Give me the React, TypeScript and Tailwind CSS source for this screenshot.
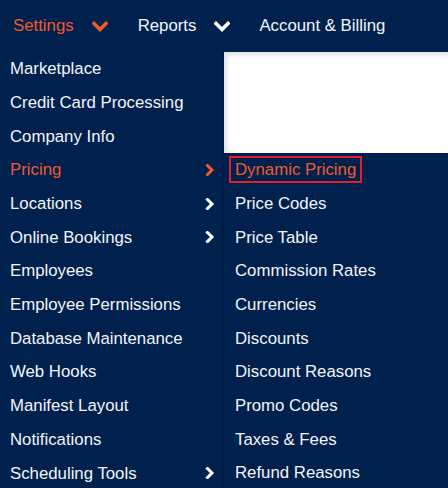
import React from 'react';

const NAVY = 'bg-[#00204e]';

const leftItems: { label: string; sub?: boolean; active?: boolean }[] = [
  { label: 'Marketplace' },
  { label: 'Credit Card Processing' },
  { label: 'Company Info' },
  { label: 'Pricing', sub: true, active: true },
  { label: 'Locations', sub: true },
  { label: 'Online Bookings', sub: true },
  { label: 'Employees' },
  { label: 'Employee Permissions' },
  { label: 'Database Maintenance' },
  { label: 'Web Hooks' },
  { label: 'Manifest Layout' },
  { label: 'Notifications' },
  { label: 'Scheduling Tools', sub: true },
];

const pricingItems = [
  'Dynamic Pricing',
  'Price Codes',
  'Price Table',
  'Commission Rates',
  'Currencies',
  'Discounts',
  'Discount Reasons',
  'Promo Codes',
  'Taxes & Fees',
  'Refund Reasons',
];

const ChevronDown = ({ className }: { className?: string }) => (
  <svg width="16" height="11" viewBox="0 0 16 11" className={className} fill="none">
    <path d="M2 2.5 L8 8.5 L14 2.5" stroke="currentColor" strokeWidth="3.6" strokeLinecap="square" />
  </svg>
);

const ChevronRight = ({ className }: { className?: string }) => (
  <svg width="10" height="12" viewBox="0 0 10 12" className={className} fill="none">
    <path d="M2.5 1.5 L7 6 L2.5 10.5" stroke="currentColor" strokeWidth="3" strokeLinecap="square" />
  </svg>
);

export default function App() {
  return (
    <div
      className={`w-[448px] h-[488px] overflow-hidden ${NAVY} text-[16.8px] text-[#f3f5f8] flex flex-col`}
      style={{ fontFamily: '"Liberation Sans", Arial, sans-serif' }}
    >
      {/* top nav */}
      <div className="h-[52px] shrink-0 flex items-center pl-[13px]">
        <span className="text-[#f05a28]">Settings</span>
        <ChevronDown className="ml-[18px] text-[#f05a28]" />
        <span className="ml-[30px]">Reports</span>
        <ChevronDown className="ml-[18px] text-white" />
        <span className="ml-[29px]">Account &amp; Billing</span>
      </div>

      <div className="flex flex-1">
        {/* settings dropdown */}
        <div className="w-[224px] shrink-0 border-r-2 border-[#001a42]">
          {leftItems.map((it) => (
            <div
              key={it.label}
              className={`h-[33.7px] flex items-center justify-between pl-[10px] pr-[7px] ${
                it.active ? 'text-[#f05a28]' : ''
              }`}
            >
              <span>{it.label}</span>
              {it.sub && <ChevronRight className={it.active ? 'text-[#f05a28]' : 'text-white'} />}
            </div>
          ))}
        </div>

        {/* page content + pricing submenu */}
        <div className="flex-1 flex flex-col">
          <div className="h-[101px] bg-white shadow-[inset_3px_3px_5px_rgba(0,0,0,0.12)]" />
          <div className="flex-1">
            {pricingItems.map((label, i) => (
              <div key={label} className="h-[33.7px] flex items-center pl-[5px]">
                {i === 0 ? (
                  <span className="border-2 border-[#e3202b] px-[4px] h-[27px] flex items-center text-[#f05a28]">
                    {label}
                  </span>
                ) : (
                  <span className="pl-[6px]">{label}</span>
                )}
              </div>
            ))}
          </div>
        </div>
      </div>
    </div>
  );
}
